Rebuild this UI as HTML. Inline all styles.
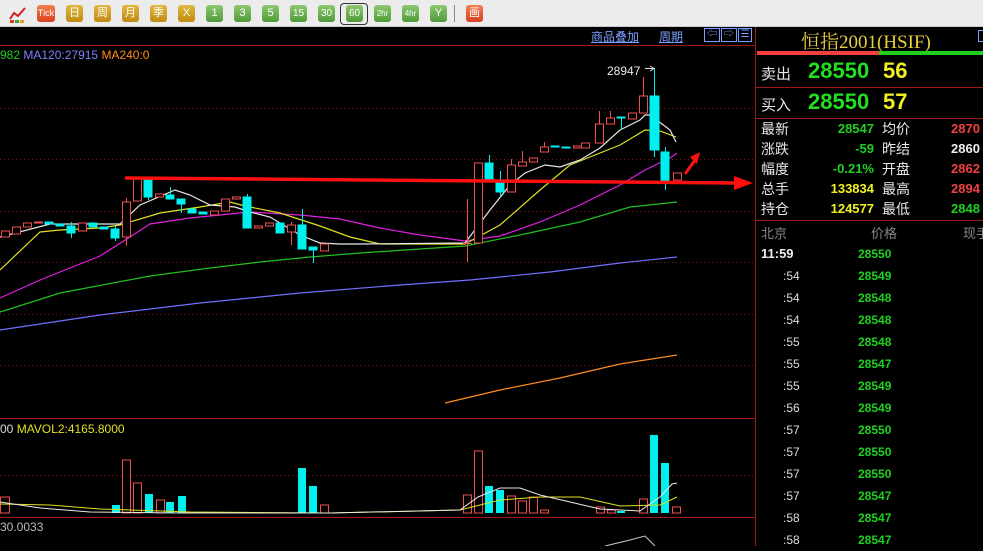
<!DOCTYPE html>
<html><head><meta charset="utf-8"><style>
*{margin:0;padding:0;box-sizing:border-box}
body{width:983px;height:546px;overflow:hidden;background:#000;font-family:"Liberation Sans","Noto Sans CJK SC",sans-serif;position:relative}
.tb{position:absolute;left:0;top:0;width:983px;height:27px;background:#ececec;border-bottom:1px solid #ccc}
.ic{position:absolute;top:5px;width:17px;height:17px;border-radius:3px;color:#fff;font-size:11px;line-height:17px;text-align:center;font-family:"Liberation Sans","Noto Sans CJK SC",sans-serif}
.g{background:linear-gradient(#e0b840,#c08a10)}
.n{background:linear-gradient(#8cc870,#4e9a38)}
.r{background:linear-gradient(#f08050,#d84020)}
.t{position:absolute;white-space:nowrap}
.rp{position:absolute;left:756px;top:27px;width:227px;height:519px}
.lab{position:absolute;color:#e8e8e8;font-size:14px}
</style></head><body>
<div class="tb">
<svg style="position:absolute;left:8px;top:5px" width="20" height="18"><polyline points="2,14 6,8 10,11 17,3" fill="none" stroke="#d02020" stroke-width="2"/><rect x="2" y="15" width="4" height="3" fill="#d04020"/><rect x="7" y="15" width="4" height="3" fill="#40a040"/><rect x="12" y="15" width="4" height="3" fill="#e0a020"/></svg>
<div class="ic r" style="left:37px;width:18px;font-size:9px">Tick</div>
<div class="ic g" style="left:66px">日</div>
<div class="ic g" style="left:94px">周</div>
<div class="ic g" style="left:122px">月</div>
<div class="ic g" style="left:150px">季</div>
<div class="ic g" style="left:178px">X</div>
<div class="ic n" style="left:206px">1</div>
<div class="ic n" style="left:234px">3</div>
<div class="ic n" style="left:262px">5</div>
<div class="ic n" style="left:290px;font-size:10px">15</div>
<div class="ic n" style="left:318px;font-size:10px">30</div>
<div style="position:absolute;left:340px;top:3px;width:28px;height:22px;border:1px solid #333;border-radius:4px"></div>
<div class="ic n" style="left:346px;font-size:10px">60</div>
<div class="ic n" style="left:374px;font-size:8px">2hr</div>
<div class="ic n" style="left:402px;font-size:8px">4hr</div>
<div class="ic n" style="left:430px">Y</div>
<div style="position:absolute;left:454px;top:5px;width:1px;height:17px;background:#888"></div>
<div class="ic r" style="left:466px">画</div>
</div>

<svg style="position:absolute;left:0;top:27px" width="756" height="519">
<g transform="translate(0,-27)">
<line x1="0" y1="45.5" x2="755" y2="45.5" stroke="#a01818"/>
<line x1="755.5" y1="27" x2="755.5" y2="546" stroke="#a01818"/>
<g stroke="#801010" stroke-dasharray="1,3">
<line x1="0" y1="108.5" x2="755" y2="108.5"/><line x1="0" y1="159.5" x2="755" y2="159.5"/>
<line x1="0" y1="211.5" x2="755" y2="211.5"/><line x1="0" y1="262.5" x2="755" y2="262.5"/>
<line x1="0" y1="314.5" x2="755" y2="314.5"/><line x1="0" y1="365.5" x2="755" y2="365.5"/>
<line x1="0" y1="475.5" x2="755" y2="475.5"/>
</g>
<line x1="0" y1="418.5" x2="755" y2="418.5" stroke="#a01818"/>
<line x1="0" y1="517.5" x2="755" y2="517.5" stroke="#a01818"/>
<g fill="none" stroke-width="1.2">
<polyline stroke="#ff8c20" points="445,403 500,390 560,378 620,364 677,355"/>
<polyline stroke="#7070ff" points="0,330 100,315 200,303 300,293 400,285 470,280 550,272 620,263 677,257"/>
<polyline stroke="#20c020" points="0,312 60,293 150,276 210,268 260,262 310,257 360,253 420,249 465,246 520,235 580,222 630,207 677,202"/>
<polyline stroke="#e020e0" points="0,298 40,280 70,268 100,256 130,237 150,224 190,218 250,212 300,215 340,219 380,228 420,235 465,241 500,236 540,222 580,205 620,185 645,170 670,158 677,153"/>
<polyline stroke="#e0e020" points="0,270 40,232 60,230 100,228 120,225 160,213 200,207 230,202 245,206 280,213 320,226 350,237 380,244 465,244 500,225 540,190 570,165 600,153 620,145 645,130 660,131 676,137"/>
<polyline stroke="#e8e8e8" points="0,237 50,224 120,224 140,205 175,190 190,195 210,205 235,207 250,212 270,217 300,235 320,243 340,244 360,244 465,243 490,210 510,185 525,173 545,165 560,167 580,160 600,148 620,130 640,120 645,115 650,115 670,130 676,142"/>
</g>
<g stroke="#f05050" fill="#000" stroke-width="1">
<rect x="1.5" y="231" width="8" height="6"/><rect x="12.5" y="227" width="8" height="7"/><rect x="23.5" y="223" width="8" height="4"/><rect x="34.5" y="222" width="8" height="1"/>
<rect x="78.5" y="223" width="8" height="8"/><line x1="126.5" y1="198" x2="126.5" y2="246"/><rect x="122.5" y="202" width="8" height="35"/>
<rect x="133.5" y="179" width="8" height="22"/><rect x="155.5" y="194" width="8" height="3"/><rect x="210.5" y="211" width="8" height="4"/>
<rect x="221.5" y="199" width="8" height="12"/><rect x="232.5" y="197" width="8" height="2"/><rect x="254.5" y="226" width="8" height="2"/>
<rect x="265.5" y="223" width="8" height="3"/><line x1="291.5" y1="222" x2="291.5" y2="245"/><rect x="287.5" y="225" width="8" height="7"/>
<rect x="320.5" y="244" width="8" height="7"/>
<line x1="467.5" y1="199" x2="467.5" y2="262"/><line x1="463" y1="243.5" x2="472" y2="243.5"/>
<rect x="474.5" y="163" width="8" height="80"/><line x1="511.5" y1="159" x2="511.5" y2="165"/><rect x="507.5" y="165" width="8" height="27"/>
<line x1="522.5" y1="151" x2="522.5" y2="162"/><rect x="518.5" y="162" width="8" height="4"/><rect x="529.5" y="158" width="8" height="4"/>
<line x1="544.5" y1="142" x2="544.5" y2="147"/><rect x="540.5" y="147" width="8" height="5"/><rect x="573.5" y="146" width="8" height="2"/>
<rect x="581.5" y="143" width="8" height="5"/><line x1="599.5" y1="111" x2="599.5" y2="124"/><rect x="595.5" y="124" width="8" height="19"/>
<line x1="610.5" y1="111" x2="610.5" y2="118"/><rect x="606.5" y="118" width="8" height="6"/><rect x="628.5" y="113" width="8" height="6"/>
<line x1="643.5" y1="77" x2="643.5" y2="96"/><rect x="639.5" y="96" width="8" height="17"/><rect x="673.5" y="173" width="8" height="7"/>
</g>
<g fill="#00f0f0" stroke="#00f0f0">
<rect x="45" y="222" width="8" height="2"/><rect x="56" y="224" width="8" height="2"/><line x1="71.5" y1="222" x2="71.5" y2="238"/><rect x="67" y="226" width="8" height="7"/>
<rect x="89" y="223" width="8" height="4"/><rect x="100" y="227" width="8" height="2"/><line x1="115.5" y1="226" x2="115.5" y2="241"/><rect x="111" y="229" width="8" height="9"/>
<line x1="148.5" y1="177" x2="148.5" y2="200"/><rect x="144" y="180" width="8" height="17"/><line x1="170.5" y1="187" x2="170.5" y2="199"/><rect x="166" y="195" width="8" height="4"/>
<line x1="181.5" y1="199" x2="181.5" y2="213"/><rect x="177" y="199" width="8" height="5"/><rect x="188" y="209" width="8" height="4"/><rect x="199" y="212" width="8" height="2"/>
<line x1="247.5" y1="194" x2="247.5" y2="228"/><rect x="243" y="197" width="8" height="31"/><rect x="276" y="223" width="8" height="10"/>
<line x1="302.5" y1="209" x2="302.5" y2="249"/><rect x="298" y="225" width="8" height="24"/><line x1="313.5" y1="248" x2="313.5" y2="263"/><rect x="309" y="247" width="8" height="3"/>
<line x1="489.5" y1="155" x2="489.5" y2="180"/><rect x="485" y="163" width="8" height="17"/><line x1="500.5" y1="171" x2="500.5" y2="197"/><rect x="496" y="180" width="8" height="12"/>
<rect x="551" y="146" width="8" height="1"/><rect x="562" y="147" width="8" height="1"/><line x1="621.5" y1="118" x2="621.5" y2="130"/><rect x="617" y="117" width="8" height="1"/>
<line x1="654.5" y1="68" x2="654.5" y2="157"/><rect x="650" y="96" width="9" height="54"/><line x1="665.5" y1="147" x2="665.5" y2="190"/><rect x="661" y="152" width="8" height="29"/>
</g>
<line x1="645" y1="68.5" x2="654" y2="68.5" stroke="#ddd"/><polyline points="650,66 654,68.5 650,71" fill="none" stroke="#ddd"/>
<line x1="125" y1="178" x2="738" y2="183" stroke="#ff1010" stroke-width="3.5"/>
<polygon points="734,176 753,183 734,190" fill="#ff1010"/>
<line x1="685" y1="174" x2="695" y2="160" stroke="#ff1010" stroke-width="3"/>
<polygon points="690,157 700,152 697,164" fill="#ff1010"/>
<g stroke="#f05050" fill="#000">
<rect x="0.5" y="497" width="9" height="16"/><rect x="122.5" y="460" width="8" height="53"/><rect x="133.5" y="483" width="8" height="30"/>
<rect x="156.5" y="500" width="8" height="13"/><rect x="320.5" y="505" width="8" height="8"/><rect x="463.5" y="495" width="8" height="18"/>
<rect x="474.5" y="451" width="8" height="62"/><rect x="507.5" y="496" width="8" height="17"/><rect x="518.5" y="501" width="8" height="12"/>
<rect x="529.5" y="497" width="8" height="16"/><rect x="540.5" y="510" width="8" height="3"/><rect x="596.5" y="507" width="8" height="6"/>
<rect x="607.5" y="510" width="8" height="3"/><rect x="639.5" y="499" width="8" height="14"/><rect x="672.5" y="507" width="8" height="6"/>
</g>
<g fill="#00f0f0">
<rect x="112" y="505" width="8" height="8"/><rect x="145" y="494" width="8" height="19"/><rect x="166" y="502" width="8" height="11"/>
<rect x="178" y="496" width="8" height="17"/><rect x="298" y="468" width="8" height="45"/><rect x="309" y="486" width="8" height="27"/>
<rect x="485" y="486" width="8" height="27"/><rect x="496" y="490" width="8" height="23"/><rect x="617" y="511" width="8" height="2"/>
<rect x="650" y="435" width="8" height="78"/><rect x="661" y="463" width="8" height="50"/>
</g>
<g fill="none" stroke-width="1">
<polyline stroke="#e0e020" points="0,504 50,505 100,509 190,512 330,513 460,510 480,505 500,500 540,497 580,497 620,506 660,505 677,497"/>
<polyline stroke="#e8e8e8" points="0,502 40,508 90,512 180,513 330,513 460,510 478,497 500,488 520,488 540,495 600,509 640,511 660,497 672,484 677,483"/>
</g>
<polyline points="605,546 630,540 645,536 655,546" fill="none" stroke="#ccc"/>
</g>
</svg>
<div class="t" style="left:0;top:48px;font-size:12px"><span style="color:#20d020">982</span> <span style="color:#8080ff">MA120:27915</span> <span style="color:#ff8c20">MA240:0</span></div>
<div class="t" style="left:0;top:422px;font-size:12px;color:#e0e020"><span style="color:#ddd">00</span> MAVOL2:4165.8000</div>
<div class="t" style="left:0;top:520px;font-size:12px;color:#bbb">30.0033</div>
<div class="t" style="left:607px;top:64px;font-size:12px;color:#e8e8e8">28947</div>
<div class="t" style="left:591px;top:28px;font-size:12px;color:#7aa0ff;text-decoration:underline">商品叠加</div>
<div class="t" style="left:659px;top:28px;font-size:12px;color:#7aa0ff;text-decoration:underline">周期</div>
<div style="position:absolute;left:704px;top:28px;width:16px;height:14px;border:1px solid #7aa0ff;color:#7aa0ff;font-size:10px;line-height:12px;text-align:center">⇦</div>
<div style="position:absolute;left:721px;top:28px;width:16px;height:14px;border:1px solid #7aa0ff;color:#7aa0ff;font-size:10px;line-height:12px;text-align:center">⇨</div>
<div style="position:absolute;left:738px;top:28px;width:14px;height:14px;border:1px solid #7aa0ff;color:#7aa0ff;font-size:10px;line-height:12px;text-align:center">☰</div>

<div class="rp">
<div class="t" style="left:45px;top:0;font-size:19px;color:#e8d040;font-family:'Liberation Serif','Noto Serif CJK SC',serif">恒指2001(HSIF)</div>
<div style="position:absolute;left:222px;top:3px;width:6px;height:12px;border:1px solid #7aa0ff"></div>
<div style="position:absolute;left:1px;top:24px;width:122px;height:4px;background:#f04040"></div>
<div style="position:absolute;left:123px;top:24px;width:104px;height:4px;background:#20d020"></div>
<div class="lab" style="left:5px;top:36px;font-size:15px">卖出</div>
<div class="t" style="left:52px;top:31px;font-size:22px;font-weight:bold;color:#20e020">28550</div>
<div class="t" style="left:127px;top:31px;font-size:22px;font-weight:bold;color:#f0f020">56</div>
<div style="position:absolute;left:0;top:60px;width:227px;height:1px;background:#a01818"></div>
<div class="lab" style="left:5px;top:67px;font-size:15px">买入</div>
<div class="t" style="left:52px;top:62px;font-size:22px;font-weight:bold;color:#20e020">28550</div>
<div class="t" style="left:127px;top:62px;font-size:22px;font-weight:bold;color:#f0f020">57</div>
<div style="position:absolute;left:0;top:91px;width:227px;height:1px;background:#a01818"></div>
<div style="position:absolute;left:0;top:92px;width:227px;font-size:13px;line-height:20px">
<div style="position:relative;height:20px"><span class="lab" style="left:5px;font-size:14px">最新</span><span class="t" style="right:109px;color:#20d020;font-weight:bold">28547</span><span class="lab" style="left:126px;font-size:14px">均价</span><span class="t" style="left:195px;color:#f04040;font-weight:bold">2870</span></div>
<div style="position:relative;height:20px"><span class="lab" style="left:5px;font-size:14px">涨跌</span><span class="t" style="right:109px;color:#20d020;font-weight:bold">-59</span><span class="lab" style="left:126px;font-size:14px">昨结</span><span class="t" style="left:195px;color:#eee;font-weight:bold">2860</span></div>
<div style="position:relative;height:20px"><span class="lab" style="left:5px;font-size:14px">幅度</span><span class="t" style="right:109px;color:#20d020;font-weight:bold">-0.21%</span><span class="lab" style="left:126px;font-size:14px">开盘</span><span class="t" style="left:195px;color:#f04040;font-weight:bold">2862</span></div>
<div style="position:relative;height:20px"><span class="lab" style="left:5px;font-size:14px">总手</span><span class="t" style="right:109px;color:#f0f020;font-weight:bold">133834</span><span class="lab" style="left:126px;font-size:14px">最高</span><span class="t" style="left:195px;color:#f04040;font-weight:bold">2894</span></div>
<div style="position:relative;height:20px"><span class="lab" style="left:5px;font-size:14px">持仓</span><span class="t" style="right:109px;color:#f0f020;font-weight:bold">124577</span><span class="lab" style="left:126px;font-size:14px">最低</span><span class="t" style="left:195px;color:#20d020;font-weight:bold">2848</span></div>
</div>
<div style="position:absolute;left:0;top:193px;width:227px;height:1px;background:#a01818"></div>
<div class="t" style="left:5px;top:196px;font-size:13px;color:#888">北京</div>
<div class="t" style="left:115px;top:196px;font-size:13px;color:#888">价格</div>
<div class="t" style="left:207px;top:196px;font-size:13px;color:#888">现手</div>
<div style="position:absolute;left:0;top:216px;width:227px;font-size:12px;line-height:22px;font-weight:bold">
<div style="position:relative;height:22px"><span class="t" style="left:5px;color:#eee;font-size:13px">11:59</span><span class="t" style="left:102px;color:#20d020">28550</span></div>
<div style="position:relative;height:22px"><span class="t" style="left:27px;color:#ddd;font-weight:normal">:54</span><span class="t" style="left:102px;color:#20d020">28549</span></div>
<div style="position:relative;height:22px"><span class="t" style="left:27px;color:#ddd;font-weight:normal">:54</span><span class="t" style="left:102px;color:#20d020">28548</span></div>
<div style="position:relative;height:22px"><span class="t" style="left:27px;color:#ddd;font-weight:normal">:54</span><span class="t" style="left:102px;color:#20d020">28548</span></div>
<div style="position:relative;height:22px"><span class="t" style="left:27px;color:#ddd;font-weight:normal">:55</span><span class="t" style="left:102px;color:#20d020">28548</span></div>
<div style="position:relative;height:22px"><span class="t" style="left:27px;color:#ddd;font-weight:normal">:55</span><span class="t" style="left:102px;color:#20d020">28547</span></div>
<div style="position:relative;height:22px"><span class="t" style="left:27px;color:#ddd;font-weight:normal">:55</span><span class="t" style="left:102px;color:#20d020">28549</span></div>
<div style="position:relative;height:22px"><span class="t" style="left:27px;color:#ddd;font-weight:normal">:56</span><span class="t" style="left:102px;color:#20d020">28549</span></div>
<div style="position:relative;height:22px"><span class="t" style="left:27px;color:#ddd;font-weight:normal">:57</span><span class="t" style="left:102px;color:#20d020">28550</span></div>
<div style="position:relative;height:22px"><span class="t" style="left:27px;color:#ddd;font-weight:normal">:57</span><span class="t" style="left:102px;color:#20d020">28550</span></div>
<div style="position:relative;height:22px"><span class="t" style="left:27px;color:#ddd;font-weight:normal">:57</span><span class="t" style="left:102px;color:#20d020">28550</span></div>
<div style="position:relative;height:22px"><span class="t" style="left:27px;color:#ddd;font-weight:normal">:57</span><span class="t" style="left:102px;color:#20d020">28547</span></div>
<div style="position:relative;height:22px"><span class="t" style="left:27px;color:#ddd;font-weight:normal">:58</span><span class="t" style="left:102px;color:#20d020">28547</span></div>
<div style="position:relative;height:22px"><span class="t" style="left:27px;color:#ddd;font-weight:normal">:58</span><span class="t" style="left:102px;color:#20d020">28547</span></div>
</div>
</div>
</body></html>
